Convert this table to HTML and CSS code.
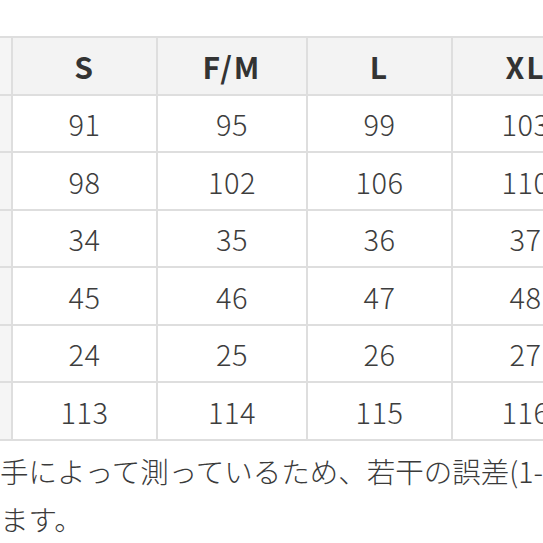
FILE: index.html
```html
<!DOCTYPE html>
<html lang="ja">
<head>
<meta charset="utf-8">
<link rel="stylesheet" href="styles.css">
</head>
<body>
<div class="page">
  <div class="sizes">
    <div class="cell label head"></div>
    <div class="cell head">S</div>
    <div class="cell head">F/M</div>
    <div class="cell head">L</div>
    <div class="cell head">XL</div>

    <div class="cell label"></div>
    <div class="cell">91</div><div class="cell">95</div><div class="cell">99</div><div class="cell">103</div>

    <div class="cell label"></div>
    <div class="cell">98</div><div class="cell">102</div><div class="cell">106</div><div class="cell">110</div>

    <div class="cell label"></div>
    <div class="cell">34</div><div class="cell">35</div><div class="cell">36</div><div class="cell">37</div>

    <div class="cell label"></div>
    <div class="cell">45</div><div class="cell">46</div><div class="cell">47</div><div class="cell">48</div>

    <div class="cell label"></div>
    <div class="cell">24</div><div class="cell">25</div><div class="cell">26</div><div class="cell">27</div>

    <div class="cell label"></div>
    <div class="cell">113</div><div class="cell">114</div><div class="cell">115</div><div class="cell">116</div>
  </div>
  <p class="note">手によって測っているため、若干の誤差(1-3cm)<br>ます。</p>
</div>
</body>
</html>
```

FILE: styles.css
```css
html, body {
  margin: 0;
  padding: 0;
  background: #fff;
}
body {
  width: 543px;
  height: 543px;
  overflow: hidden;
  font-family: "Noto Sans CJK JP", "Noto Sans", sans-serif;
  color: #3a3a3a;
}
.page {
  padding-top: 36px;
}
.sizes {
  display: grid;
  grid-template-columns: 138px 143px 148px 143px 145px;
  grid-auto-rows: 55.5px;
  gap: 2px;
  padding: 2px;
  background: #dedede;
  width: max-content;
  margin-left: -129px;
}
.cell {
  background: #fff;
  display: flex;
  align-items: center;
  justify-content: center;
  font-size: 29px;
  font-weight: 300;
  letter-spacing: 0.5px;
  color: #3d3d3d;
  white-space: nowrap;
  overflow: hidden;
}
.head {
  background: #f3f3f3;
  font-size: 30px;
  font-weight: 600;
  letter-spacing: 2px;
  color: #333;
}
.label {
  background: #f5f5f5;
}
.note {
  margin: 6px 0 0 0;
  font-size: 28.5px;
  font-weight: 300;
  line-height: 48px;
  white-space: nowrap;
  color: #3a3a3a;
}
```
